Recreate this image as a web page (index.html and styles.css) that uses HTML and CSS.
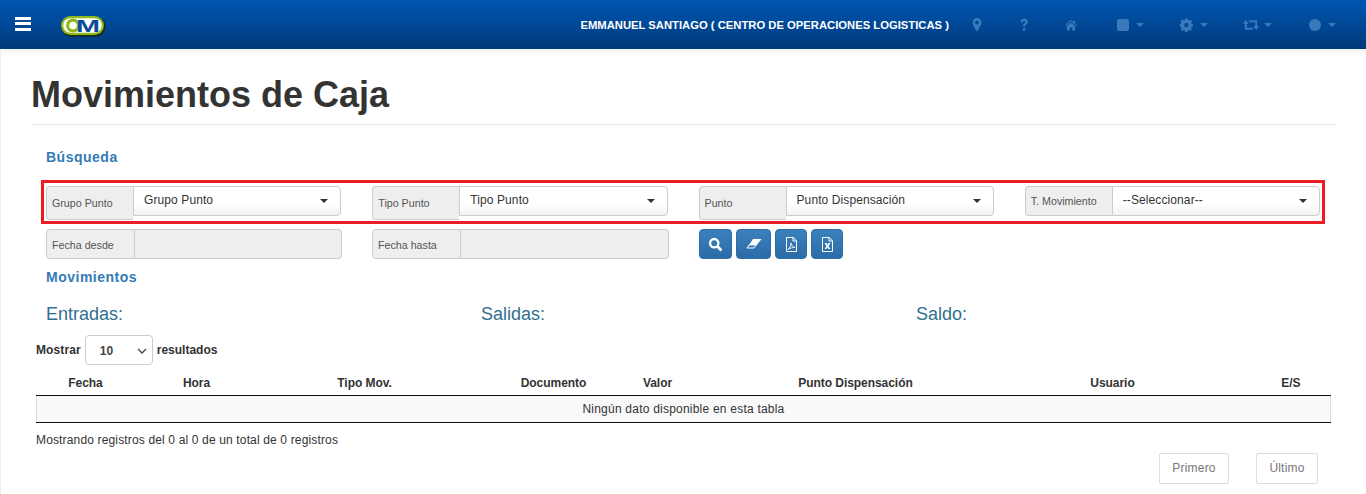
FILE: index.html
```html
<!DOCTYPE html>
<html lang="es">
<head>
<meta charset="utf-8">
<title>Movimientos de Caja</title>
<link rel="stylesheet" href="styles.css">
</head>
<body>
<header class="navbar">
  <div class="menu-btn"><span></span><span></span><span></span></div>
  <svg class="logo" viewBox="0 0 46 22" width="46" height="22">
    <rect x="1.500" y="2" width="44" height="19.500" rx="9.700" fill="#1c2b12"/>
    <rect x="1" y="1" width="43" height="19" rx="9.500" fill="#8fb81c"/>
    <rect x="3.200" y="3.200" width="38.600" height="14.600" rx="7.300" fill="#fff"/>
    <circle cx="13" cy="10.500" r="5.400" fill="none" stroke="#8fb81c" stroke-width="3.200"/>
    <text x="16" y="17" class="logo-m" textLength="24" lengthAdjust="spacingAndGlyphs">M</text>
  </svg>
  <div class="user">EMMANUEL SANTIAGO ( CENTRO DE OPERACIONES LOGISTICAS )</div>
  <nav class="nav-icons">
    <svg width="12" height="14" viewBox="0 0 12 14"><path fill="#3a7abb" fill-rule="evenodd" d="M6 0a4.400 4.400 0 0 0-4.400 4.500C1.600 7.400 6 13.600 6 13.600s4.400-6.200 4.400-9.100A4.400 4.400 0 0 0 6 0zm0 2.600a1.900 1.900 0 1 1 0 3.800 1.900 1.900 0 0 1 0-3.800z"/></svg>
    <svg width="12" height="14" viewBox="0 0 12 14"><path fill="#3a7abb" d="M2.600 4.200C2.600 1.900 4.300.8 6.300.8c2 0 3.500 1.200 3.500 3 0 1.500-.9 2.200-1.800 2.900-.6.400-.9.800-.9 1.700H4.900c0-1.500.4-2.200 1.200-2.800.7-.5 1.300-.9 1.300-1.600 0-.6-.5-1-1.200-1-.8 0-1.300.5-1.300 1.400zM4.800 10h2.500v2.600H4.800z"/></svg>
    <svg width="12" height="14" viewBox="0 0 12 14"><path fill="#3a7abb" d="M6 1.800 0 7l.7.800L6 3.300l5.300 4.500.7-.8-2-1.700V2.400H8.400v1.700zM6 4.500 1.800 8v4.500h3V9.500h2.400v3h3V8z"/></svg>
    <div class="drop">
      <svg width="17" height="14" viewBox="0 0 17 14"><rect x="5" y="1" width="12" height="12" rx="2" fill="#3a7abb"/></svg>
      <i class="caret"></i>
    </div>
    <div class="drop">
      <svg width="14" height="14" viewBox="0 0 14 14"><path fill="#3a7abb" fill-rule="evenodd" d="M6.800 1h2.400l.4 1.700 1.200.5 1.500-.9 1.400 1.700-1 1.300.5 1.200 1.300.4v2.200l-1.400.4-.5 1.200.9 1.300-1.600 1.600-1.300-.9-1.100.5-.4 1.400H6.800l-.4-1.500-1.200-.4-1.300.9-1.600-1.600.9-1.300-.5-1.200-1.400-.4V6.500l1.400-.4.500-1.200-1-1.300 1.600-1.700 1.400.9 1.200-.5z" transform="translate(-.6 -.6)"/><circle cx="7.400" cy="7" r="2.200" fill="#0a4a94"/></svg>
      <i class="caret"></i>
    </div>
    <div class="drop tight">
      <svg width="16" height="14" viewBox="0 0 17 14"><path fill="none" stroke="#3a7abb" stroke-width="2" d="M3 5v6h7.500M14 9V3H6.500"/><path fill="#3a7abb" d="M0 6l3-4.500L6 6zM11 8l3 4.500L17 8z"/></svg>
      <i class="caret"></i>
    </div>
    <div class="drop">
      <svg width="14" height="14" viewBox="0 0 14 14"><circle cx="8" cy="7" r="6" fill="#3a7abb"/></svg>
      <i class="caret"></i>
    </div>
  </nav>
</header>

<main class="page">
  <h1 class="title">Movimientos de Caja</h1>
  <div class="search">
    <h2 class="section">Búsqueda</h2>
    <div class="filter-box">
      <div class="group tall"><span class="addon">Grupo Punto</span><div class="select">Grupo Punto<i class="select-caret"></i></div></div>
      <div class="group tall"><span class="addon">Tipo Punto</span><div class="select">Tipo Punto<i class="select-caret"></i></div></div>
      <div class="group tall"><span class="addon">Punto</span><div class="select">Punto Dispensación<i class="select-caret"></i></div></div>
      <div class="group"><span class="addon short">T. Movimiento</span><div class="select">--Seleccionar--<i class="select-caret"></i></div></div>
    </div>
    <div class="filter-row">
      <div class="group date"><span class="addon">Fecha desde</span><div class="input"></div></div>
      <div class="group date"><span class="addon">Fecha hasta</span><div class="input"></div></div>
      <div class="actions">
        <button class="btn wide-a"><svg width="15" height="15" viewBox="0 0 14 14"><circle cx="5.800" cy="5.800" r="3.900" fill="none" stroke="#fff" stroke-width="2.200"/><path d="M8.700 8.700l3.800 3.800" stroke="#fff" stroke-width="2.600"/></svg></button>
        <button class="btn wide-b"><svg width="16" height="12" viewBox="0 0 16 12"><path fill="#fff" d="M7 1h8.500l-5 6.500H2.500z"/><path fill="none" stroke="#fff" d="M3.500 6.500 1 10h7l2.500-3.500"/></svg></button>
        <button class="btn"><svg width="13" height="15" viewBox="0 0 13 15"><path fill="none" stroke="#fff" d="M1.500.5h6.800l3.200 3.200v10.800h-10zM8 .5v3.500h3.500"/><path fill="none" stroke="#fff" stroke-width=".9" d="M3 12.500c1.500-1 3-4 3-6.500 .5 2.500 2 4 4 4.500-2-.2-4.500.4-7 2z"/></svg></button>
        <button class="btn"><svg width="13" height="15" viewBox="0 0 13 15"><path fill="none" stroke="#fff" d="M1.500.5h6.800l3.200 3.200v10.800h-10zM8 .5v3.500h3.500"/><path fill="#fff" d="M3.500 6h2l1 1.700L7.500 6h2L7.500 9l2 3h-2l-1-1.800L5.500 12h-2l2-3z"/></svg></button>
      </div>
    </div>
    <h2 class="section moves">Movimientos</h2>
    <div class="totals"><span>Entradas:</span><span>Salidas:</span><span>Saldo:</span></div>
  </div>

  <div class="table-wrap">
    <div class="length"><span class="length-label">Mostrar</span><div class="length-select">10<svg width="10" height="6" viewBox="0 0 10 6"><path d="M1 1l4 4 4-4" fill="none" stroke="#444" stroke-width="1.300"/></svg></div><span>resultados</span></div>
    <table class="data">
      <colgroup>
        <col class="c1"><col class="c2"><col class="c3"><col class="c4"><col class="c5"><col class="c6"><col class="c7"><col class="c8">
      </colgroup>
      <thead>
        <tr><th>Fecha</th><th>Hora</th><th>Tipo Mov.</th><th>Documento</th><th>Valor</th><th>Punto Dispensación</th><th>Usuario</th><th class="es">E/S</th></tr>
      </thead>
      <tbody>
        <tr><td colspan="8">Ningún dato disponible en esta tabla</td></tr>
      </tbody>
    </table>
    <p class="info">Mostrando registros del 0 al 0 de un total de 0 registros</p>
    <div class="pager"><span class="page-btn first">Primero</span><span class="page-btn last">Último</span></div>
  </div>
</main>
</body>
</html>
```
FILE: styles.css
```css
* { box-sizing: border-box; }
html, body { margin: 0; padding: 0; }
body {
  font-family: "Liberation Sans", Arial, sans-serif;
  font-size: 12px;
  color: #333;
  background: #fff;
  height: 494px;
  overflow: hidden;
}
.navbar {
  height: 49px;
  display: flex;
  align-items: center;
  padding: 0 30px 0 15px;
  background: linear-gradient(#0056b3, #003a7a);
}
.menu-btn { width: 16px; display: flex; flex-direction: column; gap: 2.5px; margin-top: -2px; }
.menu-btn span { display: block; height: 3px; background: #fff; }
.logo { margin-left: 29px; margin-top: 2px; }
.logo-m { font: bold 17px "Liberation Sans", Arial, sans-serif; fill: #0b4a94; }
.user {
  margin-left: auto;
  margin-right: 22px;
  color: #fff;
  font-weight: bold;
  font-size: 11.25px;
  white-space: nowrap;
}
.nav-icons { display: flex; align-items: center; gap: 35px; }
.nav-icons svg { display: block; }
.drop { display: flex; align-items: center; gap: 7px; }
.drop.tight { gap: 5px; }
.caret {
  display: block;
  width: 0; height: 0;
  border-left: 4px solid transparent;
  border-right: 4px solid transparent;
  border-top: 4px solid #3a7abb;
}
.page {
  padding: 0 30px 0 31px;
  background: linear-gradient(#f4f4f4, #fff 7px);
  box-shadow: inset 1px 0 0 #eee;
  height: 445px;
}
.title {
  margin: 0;
  padding-top: 26px;
  height: 76px;
  font-size: 36px;
  line-height: 40px;
  font-weight: bold;
  color: #333;
  border-bottom: 1px solid #e6e6e6;
}
.search { padding: 0 0 0 15px; margin-right: 1px; }
.section {
  margin: 0;
  font-size: 14px;
  line-height: 16px;
  font-weight: bold;
  color: #337ab7;
  letter-spacing: .5px;
}
.search > .section:first-child { margin-top: 24px; }
.filter-box {
  margin: 15px 10px 0 -5px;
  height: 44px;
  border: 3px solid #ed1c24;
  padding: 3px 3px 0 2px;
  display: grid;
  grid-template-columns: repeat(4, 295.25px);
  column-gap: 31px;
  align-items: start;
}
.group { display: flex; align-items: flex-start; }
.addon {
  width: 87px;
  flex: none;
  height: 30px;
  padding: 9px 0 0 5px;
  font-size: 10.7px;
  line-height: 14px;
  color: #555;
  background: #eee;
  border: 1px solid #ccc;
  border-right: 0;
  border-radius: 4px 0 0 4px;
  white-space: nowrap;
}
.tall .addon { height: 34px; padding-top: 9px; }
.addon.short { padding-top: 7px; }
.select {
  flex: 1;
  height: 30px;
  display: flex;
  align-items: center;
  justify-content: space-between;
  padding: 0 12px 2px 10px;
  background: linear-gradient(#fff 60%, #f2f2f2);
  border: 1px solid #ccc;
  border-radius: 0 4px 4px 0;
  font-size: 12px;
  letter-spacing: .1px;
  color: #333;
}
.select-caret {
  display: block;
  width: 0; height: 0;
  border-left: 4px solid transparent;
  border-right: 4px solid transparent;
  border-top: 4px solid #333;
  margin-top: 2px;
}
.filter-row {
  margin-top: 5px;
  display: grid;
  grid-template-columns: 296px 297px auto;
  column-gap: 30px;
  height: 30px;
}
.date .addon { height: 30px; padding-top: 8px; border-right: 1px solid #ccc; width: 89px; color: #555; }
.date .input {
  flex: 1;
  height: 30px;
  background: #eee;
  border: 1px solid #ccc;
  border-left: 0;
  border-radius: 0 4px 4px 0;
}
.actions { display: flex; gap: 4px; }
.btn {
  width: 32px;
  height: 30px;
  padding: 0;
  display: flex;
  align-items: center;
  justify-content: center;
  background: linear-gradient(#3b80bc, #2b6ca8);
  border: 1px solid #2e6da4;
  border-radius: 4px;
}
.btn.wide-a { width: 33px; }
.btn.wide-b { width: 35px; }
.section.moves { margin-top: 10px; }
.totals {
  margin-top: 19px;
  display: grid;
  grid-template-columns: repeat(3, 435px);
  font-size: 18px;
  line-height: 20px;
  color: #31708f;
}
.table-wrap { padding-left: 5px; margin-right: 5px; }
.length {
  margin-top: 11px;
  height: 30px;
  display: flex;
  align-items: center;
  gap: 4px;
  font-weight: bold;
  font-size: 12px;
}
.length-label { letter-spacing: .1px; }
.length-select {
  width: 68px;
  height: 30px;
  display: flex;
  align-items: center;
  justify-content: space-between;
  padding: 1px 5px 0 14px;
  border: 1px solid #ccc;
  border-radius: 4px;
  font-weight: bold;
  color: #444;
}
.data { width: 1294px; margin-top: 6px; border-collapse: collapse; table-layout: fixed; }
.c1 { width: 98px; } .c2 { width: 124px; } .c3 { width: 212px; } .c4 { width: 166px; }
.c5 { width: 42px; } .c6 { width: 354px; } .c7 { width: 160px; } .c8 { width: 138px; }
.data th {
  height: 24px;
  padding: 0;
  font-size: 12px;
  letter-spacing: -.05px;
  text-align: center;
  border-bottom: 1px solid #111;
  white-space: nowrap;
}
.data th.es { text-align: right; padding-right: 30px; }
.data td {
  height: 27px;
  padding: 0;
  text-align: center;
  font-size: 12px;
  letter-spacing: .22px;
  background: #f9f9f9;
  border-left: 1px solid #ddd;
  border-right: 1px solid #ddd;
  border-bottom: 1px solid #111;
}
.info { margin: 10px 0 0; line-height: 14px; font-size: 12px; letter-spacing: .15px; }
.pager { margin-top: 6px; display: flex; justify-content: flex-end; gap: 27px; padding-right: 13px; }
.page-btn {
  height: 31px;
  line-height: 29px;
  text-align: center;
  font-size: 12px;
  letter-spacing: .2px;
  color: #777;
  border: 1px solid #ddd;
  border-radius: 2px;
  background: #fff;
}
.first { width: 70px; }
.last { width: 62px; }
```
